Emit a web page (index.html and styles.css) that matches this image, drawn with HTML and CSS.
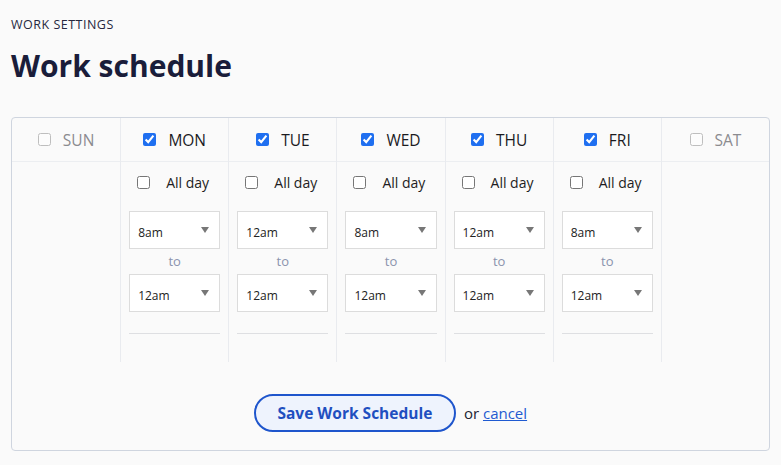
FILE: index.html
```html
<!DOCTYPE html>
<html lang="en">
<head>
    <meta charset="UTF-8">
    <meta name="viewport" content="width=device-width, initial-scale=1.0">
    <title>Work schedule</title>
    <link rel="stylesheet" href="styles.css">
</head>
<body>
    <div class="page">
        <p class="eyebrow">WORK SETTINGS</p>
        <h1>Work schedule</h1>

        <form class="panel" id="scheduleForm">
            <div class="days">
                <div class="day off">
                    <label class="day-head"><input type="checkbox"> SUN</label>
                    <div class="day-body"></div>
                </div>
                <div class="day">
                    <label class="day-head"><input type="checkbox" checked> MON</label>
                    <div class="day-body">
                        <label class="allday"><input type="checkbox"> All day</label>
                        <div class="pick"><select><option>8am</option></select></div>
                        <div class="to">to</div>
                        <div class="pick"><select><option>12am</option></select></div>
                        <div class="rule"></div>
                    </div>
                </div>
                <div class="day">
                    <label class="day-head"><input type="checkbox" checked> TUE</label>
                    <div class="day-body">
                        <label class="allday"><input type="checkbox"> All day</label>
                        <div class="pick"><select><option>12am</option></select></div>
                        <div class="to">to</div>
                        <div class="pick"><select><option>12am</option></select></div>
                        <div class="rule"></div>
                    </div>
                </div>
                <div class="day">
                    <label class="day-head"><input type="checkbox" checked> WED</label>
                    <div class="day-body">
                        <label class="allday"><input type="checkbox"> All day</label>
                        <div class="pick"><select><option>8am</option></select></div>
                        <div class="to">to</div>
                        <div class="pick"><select><option>12am</option></select></div>
                        <div class="rule"></div>
                    </div>
                </div>
                <div class="day">
                    <label class="day-head"><input type="checkbox" checked> THU</label>
                    <div class="day-body">
                        <label class="allday"><input type="checkbox"> All day</label>
                        <div class="pick"><select><option>12am</option></select></div>
                        <div class="to">to</div>
                        <div class="pick"><select><option>12am</option></select></div>
                        <div class="rule"></div>
                    </div>
                </div>
                <div class="day">
                    <label class="day-head"><input type="checkbox" checked> FRI</label>
                    <div class="day-body">
                        <label class="allday"><input type="checkbox"> All day</label>
                        <div class="pick"><select><option>8am</option></select></div>
                        <div class="to">to</div>
                        <div class="pick"><select><option>12am</option></select></div>
                        <div class="rule"></div>
                    </div>
                </div>
                <div class="day off">
                    <label class="day-head"><input type="checkbox"> SAT</label>
                    <div class="day-body"></div>
                </div>
            </div>

            <div class="actions">
                <button type="submit" class="save">Save Work Schedule</button>
                <span class="or">or <a href="#">cancel</a></span>
            </div>
        </form>
    </div>
</body>
</html>
```

FILE: styles.css
```css
body {
    font-family: 'Open Sans', sans-serif;
    background-color: #fafafa;
    margin: 0;
    padding: 0;
    color: #1c1e3b;
}
.page {
    padding: 17px 11px 0;
}
.eyebrow {
    margin: 0;
    font-size: 12.5px;
    line-height: 16px;
    letter-spacing: 0.5px;
    color: #262840;
}
h1 {
    margin: 13px 0 0;
    font-size: 30px;
    line-height: 40px;
    font-weight: 700;
    color: #1a1d3a;
}
.panel {
    margin-top: 31px;
    border: 1px solid #cfd5df;
    border-radius: 4px;
    height: 334px;
    box-sizing: border-box;
}
.days {
    display: grid;
    grid-template-columns: repeat(7, 1fr);
}
.day + .day {
    border-left: 1px solid #e9ebef;
}
.day-head {
    display: flex;
    align-items: center;
    justify-content: center;
    gap: 12px;
    height: 43px;
    border-bottom: 1px solid #eceef1;
    font-size: 15.5px;
    color: #1b1b1f;
}
.off .day-head {
    color: #8b8b8f;
}
.off input {
    opacity: 0.45;
}
input[type="checkbox"] {
    margin: 0;
    width: 13px;
    height: 13px;
    accent-color: #1f6ff0;
}
.day-body {
    height: 200px;
    padding: 12px 8px 0;
    box-sizing: border-box;
    display: flex;
    flex-direction: column;
}
.allday {
    display: flex;
    align-items: center;
    gap: 16px;
    height: 16px;
    padding-left: 8px;
    font-size: 14px;
    color: #1d1d22;
    margin-bottom: 21px;
}
.pick {
    position: relative;
    height: 38px;
}
.pick select {
    appearance: none;
    -webkit-appearance: none;
    width: 100%;
    height: 38px;
    border: 1px solid #dcdcdc;
    border-radius: 0;
    background: #fff;
    padding: 4px 8px 0;
    font-family: inherit;
    font-size: 12px;
    color: #222;
}
.pick::after {
    content: "";
    position: absolute;
    right: 11px;
    top: 16px;
    border-left: 4px solid transparent;
    border-right: 4px solid transparent;
    border-top: 6px solid #777;
    pointer-events: none;
}
.to {
    height: 25px;
    line-height: 25px;
    text-align: center;
    font-size: 13px;
    color: #8a93ad;
}
.rule {
    margin-top: 21px;
    border-top: 1px solid #dedfe2;
}
.actions {
    display: flex;
    align-items: center;
    justify-content: center;
    gap: 8px;
    padding-top: 32px;
}
.save {
    width: 202px;
    height: 38px;
    border: 2px solid #1e55cc;
    border-radius: 19px;
    background-color: #eef3fd;
    color: #1f4fc0;
    font-family: inherit;
    font-size: 15.5px;
    font-weight: 700;
    cursor: pointer;
}
.or {
    font-size: 15px;
    color: #222432;
}
.or a {
    color: #1f5ad1;
}
```
